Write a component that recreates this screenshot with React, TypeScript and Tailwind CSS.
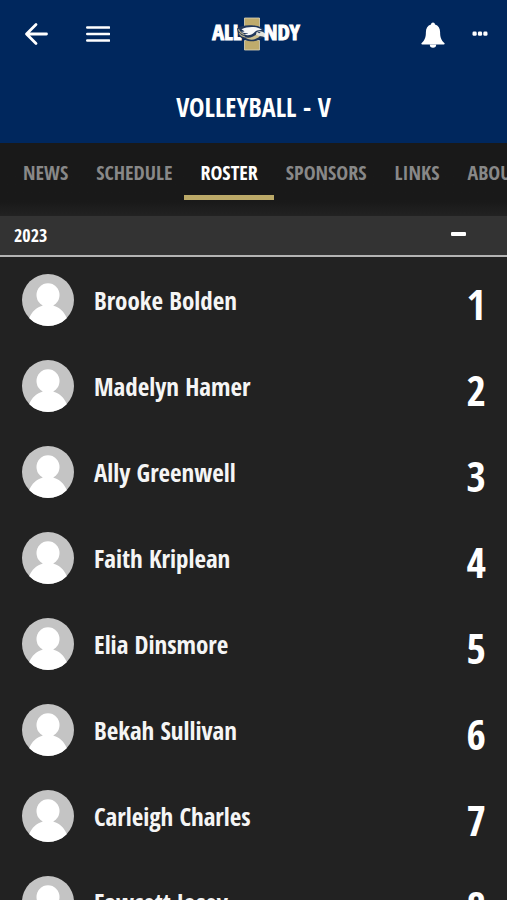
const tabs = ["NEWS", "SCHEDULE", "ROSTER", "SPONSORS", "LINKS", "ABOUT"];
const activeTab = "ROSTER";

const players = [
  { number: 1, name: "Brooke Bolden" },
  { number: 2, name: "Madelyn Hamer" },
  { number: 3, name: "Ally Greenwell" },
  { number: 4, name: "Faith Kriplean" },
  { number: 5, name: "Elia Dinsmore" },
  { number: 6, name: "Bekah Sullivan" },
  { number: 7, name: "Carleigh Charles" },
  { number: 8, name: "Fawcett Josey" },
];

function BackIcon() {
  return (
    <svg
      viewBox="0 0 24 24"
      className="size-6"
      fill="none"
      stroke="currentColor"
      strokeWidth="2.8"
      strokeLinecap="round"
      strokeLinejoin="round"
    >
      <path d="M22.500 12H3M12 2.500 2.500 12l9.500 9.500" />
    </svg>
  );
}

function MenuIcon() {
  return (
    <svg
      viewBox="0 0 24 24"
      className="size-6"
      fill="none"
      stroke="currentColor"
      strokeWidth="2.6"
      strokeLinecap="round"
    >
      <path d="M1.300 5.500h21.800M1.300 12h21.800M1.300 18.500h21.800" />
    </svg>
  );
}

function BellIcon() {
  return (
    <svg viewBox="0 0 24 28" className="h-7 w-6" fill="currentColor">
      <path d="M12 2.500c-1.100 0-1.900.8-2 1.900-3.400 1-5.100 3.900-5.100 7.600 0 5.500-1.300 8.300-4.200 11-.7.700-.4 1.500.6 1.500h21.400c1 0 1.300-.8.6-1.500-2.900-2.700-4.200-5.500-4.200-11 0-3.700-1.700-6.600-5.100-7.600-.1-1.100-.9-1.900-2-1.900Z" />
      <path d="M8.800 24.500a3.200 3.200 0 0 0 6.400 0Z" />
    </svg>
  );
}

function MoreIcon() {
  return (
    <svg viewBox="0 0 16 16" className="size-4" fill="currentColor">
      <rect x="0.500" y="5.600" width="4.200" height="4.200" rx="1.400" />
      <rect x="5.900" y="5.600" width="4.200" height="4.200" rx="1.400" />
      <rect x="11.300" y="5.600" width="4.200" height="4.200" rx="1.400" />
    </svg>
  );
}

function EagleMark() {
  return (
    <svg viewBox="0 0 32 34" className="-mx-[5px] h-[34px] w-[32px]">
      <path
        d="M7.500 1h15v9.500h-2.500v13h2.500V33h-15v-9.500H10v-13H7.500Z"
        fill="#bfab6c"
        stroke="#ded6b8"
        strokeWidth="0.800"
      />
      {/* navy silhouette behind the head */}
      <path
        d="M0 11.500C4 8.500 11 7.800 17 8.600c5 .5 9.500 2.300 12 5.600 2.300 3 2.900 6.300 1.800 10.300-1.300-2.600-3-3.700-5.800-3.700-3 2.500-7 3.700-11.500 3.500-3-.2-5.300-1-7-2.600-2.800-.8-4.500-2.200-5.200-4.400C.8 15.500.3 13.500 0 11.500Z"
        fill="#20375c"
      />
      {/* crown and feathers */}
      <path
        d="M4.500 12.200c6-3 15.500-3.400 20.500.8-3.500-.3-6 .5-7.500 2.200-2.500 2.900-6.500 3.600-10.500 2.300 2-.1 3.200-.6 4.200-1.400-3 .3-5.500-.1-7.200-1.300 1.500.1 2.700-.1 3.500-.6-1.200-.5-2.100-1.200-3-2Z"
        fill="#f6f7f8"
      />
      <path
        d="M1.500 12.200c1 2.600 3 4.500 6 5.500M2.200 16.200c1.300 2.200 3.300 3.400 6 3.800"
        fill="none"
        stroke="#b9b08c"
        strokeWidth="1.100"
      />
      <path
        d="M7.500 20.300c5 1.200 9.500 0 12-3.300l3.500 2c-3.300 3.700-10 5.300-15.500 1.300Z"
        fill="#cdbf8d"
      />
      <path d="M19.500 15.300c1.500-1.200 4.500-1.500 6.500-.4 2.700 1.500 4 4 3.900 7-1.700-2-3.700-2.600-6-2.700-1.800-.2-3.400-.8-4.900-1.500Z" fill="#e4e3da" />
      <path d="m19.500 14.600 4.300.6-1.600 1.100Z" fill="#20375c" />
    </svg>
  );
}

function Logo() {
  return (
    <a
      href="#home"
      aria-label="All Indy home"
      className="flex h-[34px] items-center text-[22px] font-bold leading-[24px] [-webkit-text-stroke:1px_white]"
    >
      <span className="pb-[6px]">ALL</span>
      <EagleMark />
      <span className="pb-[6px]">NDY</span>
    </a>
  );
}

function Avatar() {
  return (
    <svg viewBox="0 0 52 52" className="size-[52px] shrink-0 rounded-full bg-[#c4c4c4]" fill="#fff">
      <ellipse cx="26" cy="21" rx="11.500" ry="11.800" />
      <path d="M20.500 29h11v2.800c6.500 1.700 10.500 6 13.300 12.200V52H7.200v-8c2.800-6.200 6.800-10.500 13.300-12.200Z" />
    </svg>
  );
}

export default function App() {
  return (
    <div className="flex h-screen flex-col overflow-hidden bg-[#222222] font-['Open_Sans_Condensed','Open_Sans',sans-serif] font-bold text-white">
      <header className="shrink-0 bg-[#00275d]">
        <div className="grid h-[68px] grid-cols-[1fr_auto_1fr] items-center pl-[24px] pr-[19px]">
          <div className="flex items-center gap-[38px]">
            <button aria-label="Back">
              <BackIcon />
            </button>
            <button aria-label="Menu">
              <MenuIcon />
            </button>
          </div>
          <Logo />
          <div className="flex items-center justify-end gap-[27px]">
            <button aria-label="Notifications">
              <BellIcon />
            </button>
            <button aria-label="More">
              <MoreIcon />
            </button>
          </div>
        </div>
        <h1 className="h-[75px] text-center text-[26px] leading-[78px]">VOLLEYBALL - V</h1>
      </header>

      <nav className="flex h-[73px] shrink-0 overflow-hidden bg-linear-to-b from-[#191919] from-80% to-[#222222] pl-[9px] text-[20px]">
        {tabs.map((tab) => (
          <button
            key={tab}
            className={
              tab === activeTab
                ? "-mx-[2px] h-[57px] shrink-0 border-b-[5px] border-[#bba968] px-[16px] pt-[8px]"
                : "h-[57px] shrink-0 border-b-[5px] border-transparent px-[14px] pt-[8px] text-[#888888]"
            }
          >
            {tab}
          </button>
        ))}
      </nav>

      <main className="min-h-0 flex-1 overflow-y-auto [scrollbar-width:none]">
        <button
          aria-expanded="true"
          className="flex h-[41px] w-full items-center justify-between border-b-2 border-[#b4b4b4] bg-[#333333] pl-[14px] pr-[41px] text-[18px]"
        >
          2023
          <span className="mb-[4px] h-[4px] w-[15px] rounded-[1px] bg-white" />
        </button>
        <ul>
          {players.map((player) => (
            <li key={player.number} className="flex h-[86px] items-center pl-[22px] pr-[21px]">
              <Avatar />
              <span className="ml-[20px] flex-1 pt-[2px] text-[25px] text-[#f5f5f5]">{player.name}</span>
              <span className="pt-[8px] text-[42px] leading-[50px]">{player.number}</span>
            </li>
          ))}
        </ul>
      </main>
    </div>
  );
}
